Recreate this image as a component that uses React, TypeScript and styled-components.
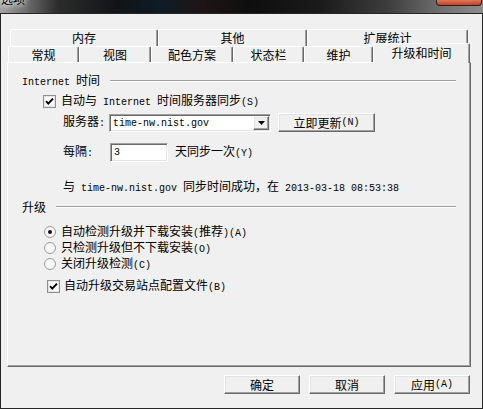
import React from 'react'
import styled, { createGlobalStyle, css } from 'styled-components'

const GlobalStyle = createGlobalStyle`
  html, body {
    margin: 0;
    padding: 0;
    background: #f0f0f0;
  }
  body {
    font-family: "Noto Sans CJK SC", "Liberation Sans", sans-serif;
    font-size: 12px;
    color: #000;
  }
  * {
    box-sizing: border-box;
  }
`

const raised = css`
  border: 1px solid;
  border-color: #fff #696969 #696969 #fff;
  box-shadow: inset -1px -1px #a0a0a0, inset 1px 1px #e3e3e3;
`

const sunken = css`
  border: 1px solid;
  border-color: #a0a0a0 #fff #fff #a0a0a0;
  box-shadow: inset 1px 1px #696969, inset -1px -1px #e3e3e3;
`

const Window = styled.div`
  width: 483px;
  height: 409px;
  display: flex;
  flex-direction: column;
  overflow: hidden;
`

const TitleBar = styled.div`
  height: 13px;
  flex: none;
  display: flex;
  justify-content: space-between;
  align-items: flex-start;
  overflow: hidden;
  background: linear-gradient(90deg, #a4a4a4 0%, #707070 5%, #2c2c2c 12%, #121417 24%, #0d1c26 33%, #1f1416 42%, #0e0e0e 52%, #1a1a1a 66%, #3c3c3c 80%, #727272 92%, #8c8c8c 100%);
`

const Title = styled.span`
  margin-top: -8px;
  padding-left: 1px;
  line-height: 14px;
  text-shadow: 0 0 4px #fff, 0 0 8px #fff;
`

const CloseBtn = styled.div`
  width: 46px;
  height: 6px;
  margin-right: 1px;
  border: 1px solid #3b1a12;
  border-top: none;
  border-radius: 0 0 4px 4px;
  background: linear-gradient(#e27656, #b9452b);
`

const Client = styled.div`
  flex: 1;
  display: flex;
  flex-direction: column;
  padding: 15px 11px 0 6px;
  background: #f0f0f0;
  border: 1px solid #262626;
`

const TabRow = styled.div<{ $indent: number; $h: number }>`
  display: flex;
  height: ${p => p.$h}px;
  margin-left: ${p => p.$indent}px;
`

const Tab = styled.div<{ $w: number; $active?: boolean }>`
  width: ${p => p.$w}px;
  height: 100%;
  display: flex;
  justify-content: center;
  align-items: center;
  line-height: 14px;
  background: #f0f0f0;
  border: 1px solid;
  border-bottom: none;
  border-color: #fff #696969 transparent #fff;
  border-radius: 2px 2px 0 0;
  box-shadow: inset -1px 0 #a0a0a0;

  ${p => p.$active && css`
    position: relative;
    z-index: 1;
    height: 20px;
    margin-top: -3px;
    margin-bottom: -1px;
    align-items: flex-start;
    padding-top: 2px;
  `}
`

const Panel = styled.div`
  width: 464px;
  height: 305px;
  flex: none;
  display: flex;
  flex-direction: column;
  padding: 11px 14px 0 14px;
  background: #f0f0f0;
  border: 1px solid;
  border-color: #fff #696969 #696969 #fff;
  box-shadow: inset -1px -1px #a0a0a0;
`

const GroupHeader = styled.div<{ $mt?: number }>`
  display: flex;
  align-items: center;
  gap: 10px;
  height: 14px;
  line-height: 14px;
  margin-top: ${p => p.$mt ?? 0}px;
  white-space: nowrap;

  &::after {
    content: '';
    flex: 1;
    border-top: 1px solid #a0a0a0;
    border-bottom: 1px solid #fff;
  }
`

const Row = styled.div<{ $indent: number; $mt: number; $h?: number; $gap?: number }>`
  display: flex;
  align-items: center;
  gap: ${p => p.$gap ?? 0}px;
  height: ${p => p.$h ?? 14}px;
  line-height: 14px;
  margin-left: ${p => p.$indent}px;
  margin-top: ${p => p.$mt}px;
  white-space: nowrap;
`

const Lat = styled.span`
  font-family: "Liberation Mono", "DejaVu Sans Mono", monospace;
  font-size: 10px;
`

const FieldLabel = styled.span<{ $w: number }>`
  width: ${p => p.$w}px;
  flex: none;
`

const Combo = styled.div`
  width: 162px;
  height: 18px;
  display: flex;
  align-items: center;
  padding: 0 1px 0 3px;
  background: #fff;
  ${sunken}
`

const ComboText = styled.span`
  flex: 1;
`

const DropBtn = styled.div`
  width: 16px;
  height: 14px;
  display: flex;
  justify-content: center;
  align-items: center;
  background: #f0f0f0;
  ${raised}
`

const TextInput = styled.div`
  width: 58px;
  height: 19px;
  display: flex;
  align-items: center;
  padding-left: 3px;
  background: #fff;
  ${sunken}
`

const Button = styled.div<{ $w: number; $ml?: number }>`
  width: ${p => p.$w}px;
  height: 19px;
  margin-left: ${p => p.$ml ?? 0}px;
  display: flex;
  justify-content: center;
  align-items: center;
  line-height: 14px;
  background: #f0f0f0;
  ${raised}
`

const Footer = styled.div`
  display: flex;
  justify-content: flex-end;
  gap: 9px;
  margin-top: 8px;
  padding-right: 1px;
`

const Glyph = styled.svg`
  flex: none;
  display: block;
`

function CheckBox() {
  return (
    <Glyph width="13" height="13" viewBox="0 0 13 13">
      <rect x="0.5" y="0.5" width="12" height="12" fill="#fbfbfb" stroke="#8e8f8f" />
      <rect x="1.5" y="1.5" width="10" height="10" fill="none" stroke="#e6e6e6" />
      <path d="M3 6.2 L5.3 8.6 L10 3.6" fill="none" stroke="#000" strokeWidth="1.9" />
    </Glyph>
  )
}

function Radio({ checked }: { checked?: boolean }) {
  return (
    <Glyph width="12" height="12" viewBox="0 0 12 12">
      <circle cx="6" cy="6" r="5.5" fill="#f6f6f6" stroke="#9a9a9a" />
      {checked && <circle cx="6" cy="6" r="2" fill="#111" />}
    </Glyph>
  )
}

const backTabs = [
  { label: '内存', w: 148 },
  { label: '其他', w: 149 },
  { label: '扩展统计', w: 161 },
]

const frontTabs = [
  { label: '常规', w: 71 },
  { label: '视图', w: 72 },
  { label: '配色方案', w: 82 },
  { label: '状态栏', w: 71 },
  { label: '维护', w: 69 },
  { label: '升级和时间', w: 97, active: true },
]

export default function App() {
  return (
    <Window>
      <GlobalStyle />
      <TitleBar>
        <Title>选项</Title>
        <CloseBtn />
      </TitleBar>
      <Client>
        <TabRow $indent={3} $h={17}>
          {backTabs.map(t => <Tab key={t.label} $w={t.w}>{t.label}</Tab>)}
        </TabRow>
        <TabRow $indent={1} $h={16}>
          {frontTabs.map(t => <Tab key={t.label} $w={t.w} $active={t.active}>{t.label}</Tab>)}
        </TabRow>
        <Panel>
          <GroupHeader><span><Lat>Internet </Lat>时间</span></GroupHeader>
          <Row $indent={21} $mt={6} $gap={5}>
            <CheckBox />
            <span>自动与<Lat> Internet </Lat>时间服务器同步<Lat>(S)</Lat></span>
          </Row>
          <Row $indent={41} $mt={5} $h={19}>
            <FieldLabel $w={46}>服务器<Lat>:</Lat></FieldLabel>
            <Combo>
              <ComboText><Lat>time-nw.nist.gov</Lat></ComboText>
              <DropBtn>
                <svg width="7" height="4" viewBox="0 0 7 4"><path d="M0 0 H7 L3.5 4 Z" fill="#000" /></svg>
              </DropBtn>
            </Combo>
            <Button $w={97} $ml={7}>立即更新<Lat>(N)</Lat></Button>
          </Row>
          <Row $indent={41} $mt={11} $h={19} $gap={7}>
            <FieldLabel $w={40}>每隔<Lat>:</Lat></FieldLabel>
            <TextInput><Lat>3</Lat></TextInput>
            <span>天同步一次<Lat>(Y)</Lat></span>
          </Row>
          <Row $indent={41} $mt={18}>
            <span>与<Lat> time-nw.nist.gov </Lat>同步时间成功，在<Lat> 2013-03-18 08:53:38</Lat></span>
          </Row>
          <GroupHeader $mt={6}><span>升级</span></GroupHeader>
          <Row $indent={22} $mt={11} $gap={5}>
            <Radio checked />
            <span>自动检测升级并下载安装<Lat>(</Lat>推荐<Lat>)(A)</Lat></span>
          </Row>
          <Row $indent={22} $mt={2} $gap={5}>
            <Radio />
            <span>只检测升级但不下载安装<Lat>(O)</Lat></span>
          </Row>
          <Row $indent={22} $mt={2} $gap={5}>
            <Radio />
            <span>关闭升级检测<Lat>(C)</Lat></span>
          </Row>
          <Row $indent={25} $mt={8} $gap={4}>
            <CheckBox />
            <span>自动升级交易站点配置文件<Lat>(B)</Lat></span>
          </Row>
        </Panel>
        <Footer>
          <Button $w={76}>确定</Button>
          <Button $w={76}>取消</Button>
          <Button $w={76}>应用<Lat>(A)</Lat></Button>
        </Footer>
      </Client>
    </Window>
  )
}
